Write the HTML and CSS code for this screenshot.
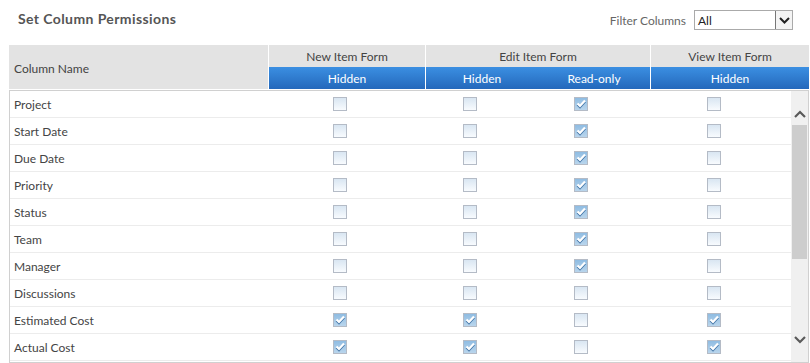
FILE: index.html
```html
<!DOCTYPE html>
<html lang="en">
<head>
    <meta charset="UTF-8">
    <title>Set Column Permissions</title>
    <link rel="stylesheet" href="styles.css">
</head>
<body>
    <div class="page">
        <div class="toolbar">
            <h1 class="title">Set Column Permissions</h1>
            <div class="filter">
                <span class="filter-label">Filter Columns</span>
                <div class="select">
                    <span class="select-value">All</span>
                    <span class="select-btn">
                        <svg width="11" height="7" viewBox="0 0 11 7"><path d="M1 1 L5.5 5.5 L10 1" fill="none" stroke="#222" stroke-width="2"/></svg>
                    </span>
                </div>
            </div>
        </div>

        <div class="grid-head">
            <div class="head-name">Column Name</div>
            <div class="head-group new">
                <div class="group-title">New Item Form</div>
                <div class="group-subs"><div class="sub">Hidden</div></div>
            </div>
            <div class="head-group edit">
                <div class="group-title">Edit Item Form</div>
                <div class="group-subs"><div class="sub">Hidden</div><div class="sub">Read-only</div></div>
            </div>
            <div class="head-group view">
                <div class="group-title">View Item Form</div>
                <div class="group-subs"><div class="sub">Hidden</div></div>
            </div>
        </div>

        <div class="grid-body">
            <div class="rows" id="rows"></div>
            <div class="scrollbar">
                <div class="scroll-arrow up">
                    <svg width="12" height="8" viewBox="0 0 12 8"><path d="M1 7 L6 2 L11 7" fill="none" stroke="#5a5a5a" stroke-width="2.2"/></svg>
                </div>
                <div class="scroll-track"><div class="scroll-thumb"></div></div>
                <div class="scroll-arrow down">
                    <svg width="12" height="8" viewBox="0 0 12 8"><path d="M1 1 L6 6 L11 1" fill="none" stroke="#5a5a5a" stroke-width="2.2"/></svg>
                </div>
            </div>
        </div>
    </div>

    <script>
        // [name, new hidden, edit hidden, edit read-only, view hidden]
        const columns = [
            ['Project', 0, 0, 1, 0],
            ['Start Date', 0, 0, 1, 0],
            ['Due Date', 0, 0, 1, 0],
            ['Priority', 0, 0, 1, 0],
            ['Status', 0, 0, 1, 0],
            ['Team', 0, 0, 1, 0],
            ['Manager', 0, 0, 1, 0],
            ['Discussions', 0, 0, 0, 0],
            ['Estimated Cost', 1, 1, 0, 1],
            ['Actual Cost', 1, 1, 0, 1]
        ];

        const tick = '<svg width="12" height="12" viewBox="0 0 12 12">' +
            '<path d="M2.5 6.5 L5 9 L10 3.5" fill="none" stroke="#3f73a6" stroke-width="2.4"/>' +
            '<path d="M2.5 5.5 L5 8 L10 2.5" fill="none" stroke="#fff" stroke-width="2.2"/></svg>';

        function box(checked) {
            return '<span class="check' + (checked ? ' checked' : '') + '">' + (checked ? tick : '') + '</span>';
        }

        const rows = document.getElementById('rows');
        rows.innerHTML = columns.map(c =>
            '<div class="row">' +
                '<div class="cell name">' + c[0] + '</div>' +
                '<div class="cell">' + box(c[1]) + '</div>' +
                '<div class="cell">' + box(c[2]) + '</div>' +
                '<div class="cell">' + box(c[3]) + '</div>' +
                '<div class="cell view">' + box(c[4]) + '</div>' +
            '</div>'
        ).join('');
    </script>
</body>
</html>
```

FILE: styles.css
```css
* {
    margin: 0;
    padding: 0;
    box-sizing: border-box;
}

body {
    font-family: Lato, 'Open Sans', sans-serif;
    font-size: 12px;
    color: #444;
    background: white;
}

.page {
    width: 809px;
    padding-left: 9px;
}

.toolbar {
    height: 45px;
    display: flex;
    align-items: flex-start;
    justify-content: space-between;
}

.title {
    font-size: 14px;
    font-weight: bold;
    letter-spacing: 0.4px;
    color: #555;
    margin: 10px 0 0 9px;
}

.filter {
    display: flex;
    align-items: center;
    margin: 10px 16px 0 0;
}

.filter-label {
    color: #666;
    margin-right: 8px;
}

.select {
    width: 99px;
    height: 20px;
    border: 1px solid #aaa;
    display: flex;
    align-items: center;
    justify-content: space-between;
}

.select-value {
    color: #222;
    padding-left: 3px;
}

.select-btn {
    width: 17px;
    height: 18px;
    border-left: 1px solid #777;
    display: flex;
    align-items: center;
    justify-content: center;
    background: #f4f4f4;
}

.grid-head {
    display: flex;
    height: 44px;
    background: #e3e3e3;
}

.head-name {
    width: 260px;
    border-right: 1px solid white;
    display: flex;
    align-items: center;
    padding: 2px 0 0 5px;
}

.head-group {
    display: flex;
    flex-direction: column;
    border-right: 1px solid white;
}

.head-group.new { width: 157px; }
.head-group.edit { width: 225px; }
.head-group.view { flex: 1; border-right: none; }

.group-title {
    height: 22px;
    line-height: 22px;
    padding-top: 1px;
    text-align: center;
}

.group-subs {
    display: flex;
    height: 22px;
    background: linear-gradient(#3b8fe2, #2468bb);
}

.sub {
    flex: 1;
    color: white;
    text-align: center;
    line-height: 22px;
    padding-top: 1px;
}

.grid-body {
    display: flex;
    margin-top: 1px;
    border: 1px solid #d0d0d0;
    height: 273px;
}

.rows {
    flex: 1;
}

.row {
    display: grid;
    grid-template-columns: 259px 141px 120px 102px 1fr;
    height: 27px;
    border-bottom: 1px solid #ececec;
}

.cell {
    display: flex;
    align-items: center;
    justify-content: center;
}

.cell.name {
    justify-content: flex-start;
    padding: 1px 0 0 4px;
}

.cell.view {
    padding-left: 4px;
}

.check {
    width: 14px;
    height: 14px;
    border: 1px solid #b4bbc6;
    background: linear-gradient(#d9e6f2, #f8fbfe);
    display: flex;
    align-items: center;
    justify-content: center;
}

.check.checked {
    background: linear-gradient(#8fbce2, #b9d5ec);
}

.scrollbar {
    width: 17px;
    background: #f0f0f0;
    display: flex;
    flex-direction: column;
}

.scroll-arrow {
    height: 17px;
    display: flex;
    align-items: center;
    justify-content: center;
}

.scroll-arrow.up {
    margin: 14px 0 3px;
}

.scroll-arrow.down {
    margin: 3px 0 14px;
}

.scroll-track {
    flex: 1;
    padding: 0 1px;
}

.scroll-thumb {
    height: 134px;
    background: #cdcdcd;
}
```
